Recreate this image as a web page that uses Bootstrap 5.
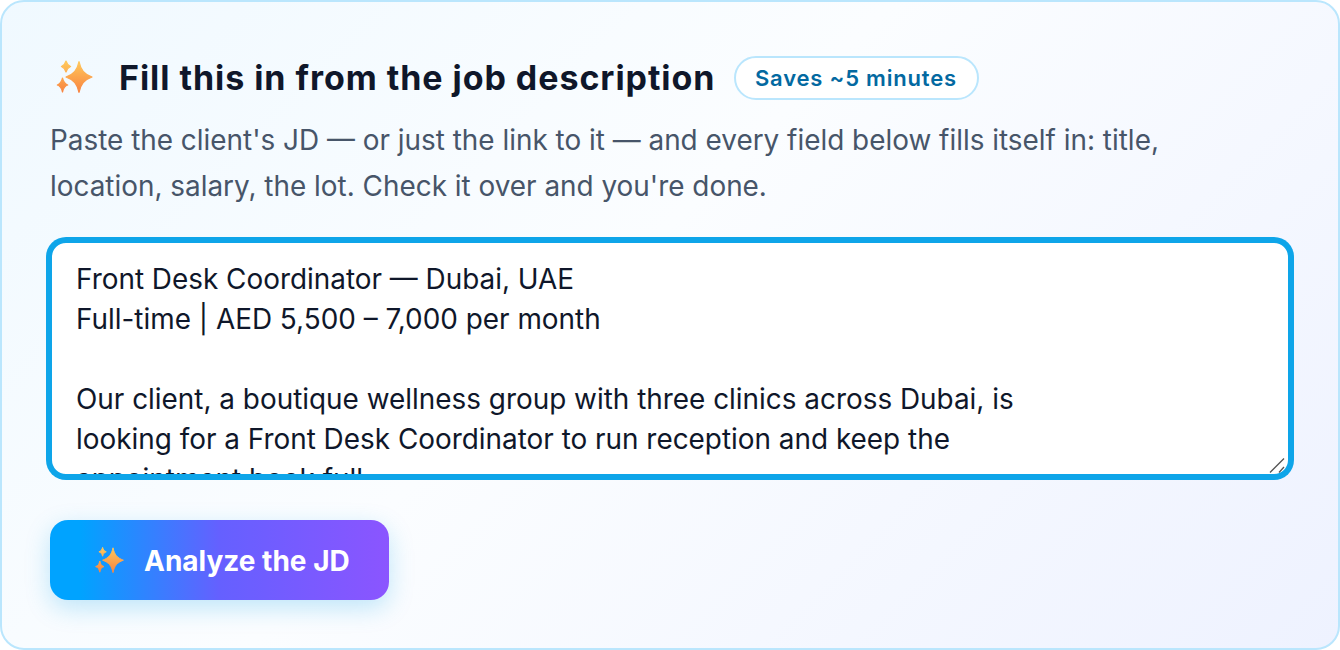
<!DOCTYPE html>
<html lang="en"><head><meta charset="utf-8">
<link href="https://cdn.jsdelivr.net/npm/bootstrap@5.3.0/dist/css/bootstrap.min.css" rel="stylesheet">
<style>
html,body{height:650px;overflow:hidden;background:#fff}
.jd-panel{width:1340px;height:650px;padding:54px 48px 48px 48px;border:2px solid #bae6fd;border-radius:24px;background:linear-gradient(135deg,#f0f9ff 0%,#fbfdff 45%,#eef2ff 100%);font-family:Inter,sans-serif}
.jd-head{height:44px}
.jd-spark{width:40px;height:40px;margin:0 25px 0 4px;flex:none}
.jd-title{font-family:Inter,sans-serif;font-size:34px;font-weight:700;color:#0f172a;letter-spacing:.95px;white-space:nowrap;margin-top:-2px}
.jd-pill{font-size:22px;font-weight:600;color:#0369a1;border:2px solid #bae6fd;border-radius:22px;background:#fff;height:44px;width:245px;margin-left:19px;padding-right:2px;letter-spacing:.8px;white-space:nowrap}
.jd-sub{font-size:27.9px;line-height:46px;color:#475569;margin:17px 0 32px;white-space:nowrap}
.jd-field{height:235px}
.jd-area{width:100%;height:235px;border:2px solid #0ea5e9;box-shadow:0 0 0 4px #0ea5e9;border-radius:16px;font:27.9px/40px Inter,sans-serif;color:#0f172a;padding:16px 24px;outline:0;background:#fff;resize:none;overflow:hidden}
.jd-grip{position:absolute;right:5px;bottom:3px;width:16px;height:16px;pointer-events:none}
.jd-btn{width:339px;height:80px;margin-top:44px;padding:2px 0 0 43px;border:0;border-radius:18px;background:linear-gradient(90deg,#00a3ff 9%,#6560ff 50%,#8b55ff 100%);color:#fff;font-size:28px;font-weight:700;box-shadow:0 8px 24px rgba(14,165,233,.25)}
.jd-btn svg{width:32px;height:32px;margin-right:19px;flex:none}
</style></head><body>
<svg width="0" height="0" class="d-block" aria-hidden="true"><defs>
<linearGradient id="jdg" gradientUnits="userSpaceOnUse" x1="0" y1="2" x2="0" y2="36"><stop offset="0" stop-color="#ffcb5c"/><stop offset="1" stop-color="#f8803f"/></linearGradient>
<symbol id="jds" viewBox="0 0 40 40"><g fill="url(#jdg)" stroke="url(#jdg)" stroke-width="1.200" stroke-linejoin="round"><path d="M25 3.500C26.800 12 30 16 38 19C30 22 26.800 26 25 34.500C23.200 26 20 22 12 19C20 16 23.200 12 25 3.500Z"/><path d="M12 3C12.800 6 14 7.500 16.600 8.500C14 9.500 12.800 11 12 14C11.200 11 10 9.500 7.400 8.500C10 7.500 11.200 6 12 3Z"/><path d="M8.500 20C9.400 24 10.600 26 13.700 27C10.600 28 9.400 30 8.500 34C7.600 30 6.400 28 3.300 27C6.400 26 7.600 24 8.500 20Z"/></g></symbol>
</defs></svg>
<div class="jd-panel">
<div class="d-flex align-items-center jd-head"><svg class="jd-spark"><use href="#jds"/></svg><span class="jd-title">Fill this in from the job description</span><span class="jd-pill d-flex align-items-center justify-content-center">Saves ~5 minutes</span></div>
<p class="jd-sub">Paste the client's JD — or just the link to it — and every field below fills itself in: title,<br>location, salary, the lot. Check it over and you're done.</p>
<div class="jd-field position-relative">
<textarea class="jd-area d-block">Front Desk Coordinator — Dubai, UAE
Full-time | AED 5,500 – 7,000 per month

Our client, a boutique wellness group with three clinics across Dubai, is
looking for a Front Desk Coordinator to run reception and keep the
appointment book full.</textarea>
<svg class="jd-grip" viewBox="0 0 16 16" aria-hidden="true"><path d="M1 15.500L15 1.500M10 15.500L15 10" stroke="#555" stroke-width="1.300" fill="none"/></svg>
</div>
<button class="jd-btn d-flex align-items-center"><svg><use href="#jds"/></svg>Analyze the JD</button>
</div>
</body></html>
